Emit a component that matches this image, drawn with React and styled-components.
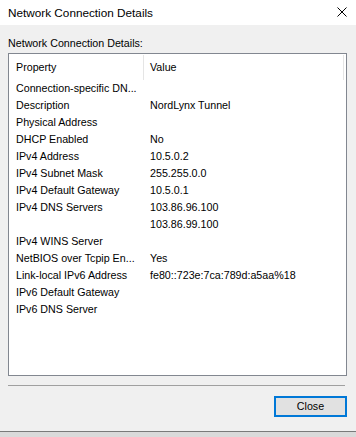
import React from "react";
import styled, { createGlobalStyle } from "styled-components";

const Global = createGlobalStyle`
  html, body { margin: 0; padding: 0; background: #f0f0f0; }
  body { font-family: "Liberation Sans", Arial, sans-serif; }
  * { box-sizing: border-box; }
`;

const Window = styled.div`
  width: 356px;
  height: 437px;
  display: flex;
  flex-direction: column;
  background: #f0f0f0;
  overflow: hidden;
`;

const TitleBar = styled.div`
  height: 25px;
  flex: none;
  background: #fff;
  display: flex;
  align-items: center;
  justify-content: space-between;
  padding: 0 9px 1px 8px;
  font-size: 11.75px;
  color: #000;
`;

const CloseX = styled.svg`
  width: 10px;
  height: 10px;
  display: block;
`;

const Body = styled.div`
  flex: 1;
  display: flex;
  flex-direction: column;
  padding: 0 9px 0 8px;
`;

const Label = styled.div`
  font-size: 10.7px;
  line-height: 13px;
  padding-top: 12px;
  margin-bottom: 3px;
  color: #000;
`;

const ListBox = styled.div`
  height: 323px;
  border: 1px solid #828790;
  background: #fff;
  display: flex;
  flex-direction: column;
`;

const Grid = styled.div`
  display: grid;
  grid-template-columns: 135px 200px;
  font-size: 10.7px;
  color: #000;
`;

const HeadCell = styled.div`
  height: 26px;
  display: flex;
  align-items: center;
  padding-left: ${(p) => p.$pad}px;
  padding-bottom: 1px;
  position: relative;
  &::after {
    content: "";
    position: absolute;
    right: 0;
    top: 1px;
    bottom: 0;
    width: 1px;
    background: #e5e5e5;
  }
`;

const Cell = styled.div`
  height: 17px;
  line-height: 17px;
  padding-left: ${(p) => p.$pad}px;
  white-space: nowrap;
  overflow: hidden;
`;

const Separator = styled.div`
  height: 1px;
  margin: 9px 2px 0 0;
  background: #a0a0a0;
`;

const Footer = styled.div`
  display: flex;
  justify-content: flex-end;
  padding-top: 10px;
`;

const Button = styled.button`
  width: 73px;
  height: 21px;
  border: 2px solid #0078d7;
  background: #e1e1e1;
  font-family: "Liberation Sans", Arial, sans-serif;
  font-size: 10.7px;
  color: #000;
  padding: 0 0 1px;
  margin: 0;
`;

const BottomEdge = styled.div`
  flex: none;
  height: 1px;
  background: #7a7a7a;
`;

const Shadow = styled.div`
  flex: none;
  height: 5px;
  background: #dadada;
`;

const rows = [
  ["Connection-specific DN...", ""],
  ["Description", "NordLynx Tunnel"],
  ["Physical Address", ""],
  ["DHCP Enabled", "No"],
  ["IPv4 Address", "10.5.0.2"],
  ["IPv4 Subnet Mask", "255.255.0.0"],
  ["IPv4 Default Gateway", "10.5.0.1"],
  ["IPv4 DNS Servers", "103.86.96.100"],
  ["", "103.86.99.100"],
  ["IPv4 WINS Server", ""],
  ["NetBIOS over Tcpip En...", "Yes"],
  ["Link-local IPv6 Address", "fe80::723e:7ca:789d:a5aa%18"],
  ["IPv6 Default Gateway", ""],
  ["IPv6 DNS Server", ""],
];

export default function App() {
  return (
    <>
      <Global />
      <Window>
        <TitleBar>
          <span>Network Connection Details</span>
          <CloseX viewBox="0 0 10 10">
            <path d="M0.5 0.5 L9.5 9.5 M9.5 0.5 L0.5 9.5" stroke="#000" strokeWidth="1" fill="none" />
          </CloseX>
        </TitleBar>
        <Body>
          <Label>Network Connection Details:</Label>
          <ListBox>
            <Grid>
              <HeadCell $pad={7}>Property</HeadCell>
              <HeadCell $pad={6}>Value</HeadCell>
              {rows.map(([k, v], i) => (
                <React.Fragment key={i}>
                  <Cell $pad={7}>{k}</Cell>
                  <Cell $pad={6}>{v}</Cell>
                </React.Fragment>
              ))}
            </Grid>
          </ListBox>
          <Separator />
          <Footer>
            <Button>Close</Button>
          </Footer>
        </Body>
        <BottomEdge />
        <Shadow />
      </Window>
    </>
  );
}
